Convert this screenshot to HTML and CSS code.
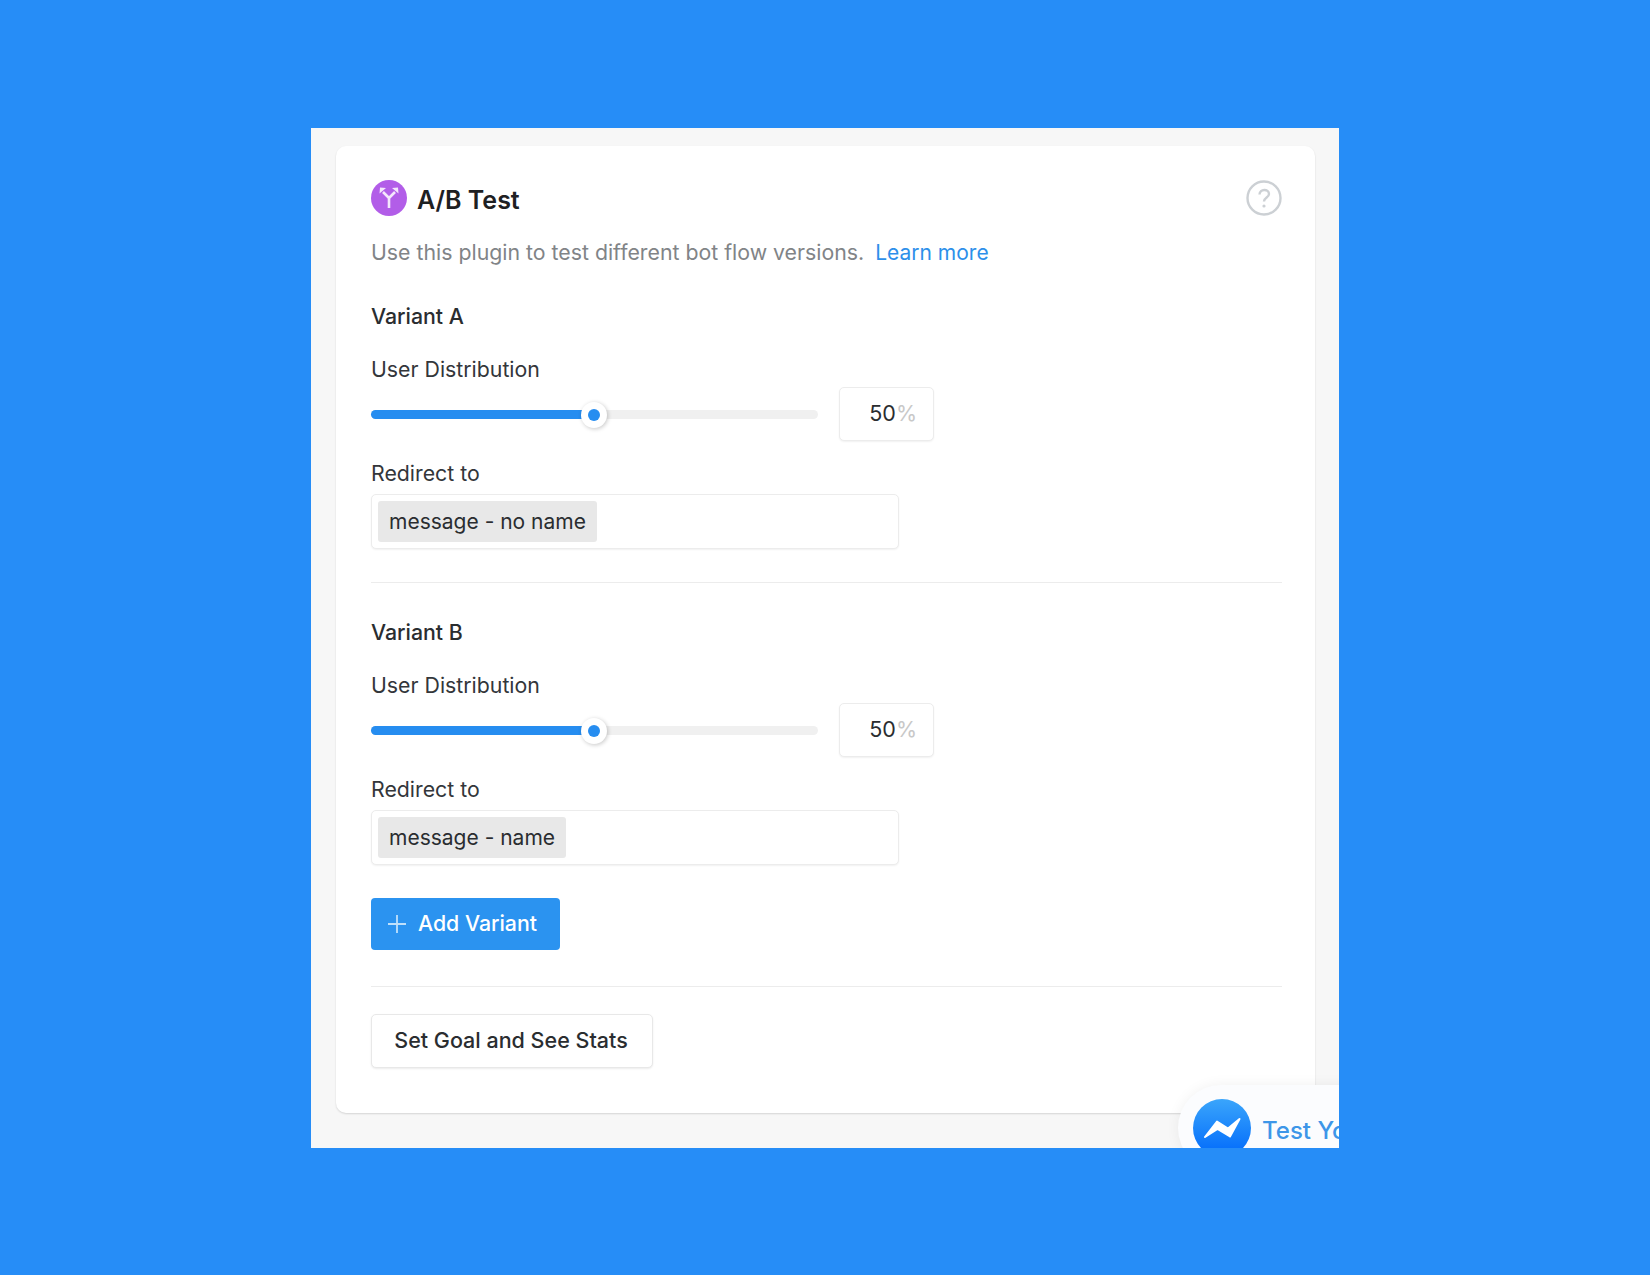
FILE: index.html
```html
<!DOCTYPE html>
<html lang="en">
<head>
  <meta charset="UTF-8">
  <title>A/B Test</title>
  <link rel="stylesheet" href="styles.css">
</head>
<body>
  <div class="panel">
    <div class="card">
      <!-- Header -->
      <div class="header">
        <div class="logo">
          <svg class="logo-icon" viewBox="0 0 36 36">
            <circle cx="18" cy="18" r="18" fill="#b25de8"/>
            <path d="M18 28v-10M18 18l-6-6M18 18l6-6" fill="none" stroke="#f4e6fc" stroke-width="2.600"/>
            <path d="M8.500 13.500l.5-6 6 .5zM27.500 13.500l-.5-6-6 .5z" fill="#f4e6fc"/>
          </svg>
          <h1 class="title">A/B Test</h1>
        </div>
        <svg class="help-icon" viewBox="0 0 36 36">
          <circle cx="18" cy="18" r="16.500" fill="none" stroke="#ccd0d4" stroke-width="2.400"/>
          <path d="M13.500 14.500c0-6 9.500-6 9.500-.500 0 3.500-5 3.500-5 7.500" fill="none" stroke="#ccd0d4" stroke-width="2.400"/>
          <circle cx="18" cy="26" r="1.600" fill="#ccd0d4"/>
        </svg>
      </div>
      <p class="description">Use this plugin to test different bot flow versions.<a class="learn-more" href="#">Learn more</a></p>

      <!-- Variant A -->
      <div class="variant">
        <div class="variant-name">Variant A</div>
        <div class="field-label">User Distribution</div>
        <div class="slider-row">
          <div class="slider">
            <div class="slider-fill"></div>
            <div class="slider-thumb"></div>
          </div>
          <div class="percent-box">50<span class="percent-sign">%</span></div>
        </div>
        <div class="field-label redirect-label">Redirect to</div>
        <div class="redirect-box"><span class="chip">message - no name</span></div>
      </div>

      <div class="divider"></div>

      <!-- Variant B -->
      <div class="variant">
        <div class="variant-name">Variant B</div>
        <div class="field-label">User Distribution</div>
        <div class="slider-row">
          <div class="slider">
            <div class="slider-fill"></div>
            <div class="slider-thumb"></div>
          </div>
          <div class="percent-box">50<span class="percent-sign">%</span></div>
        </div>
        <div class="field-label redirect-label">Redirect to</div>
        <div class="redirect-box"><span class="chip">message - name</span></div>
      </div>

      <button class="add-button">
        <svg class="plus-icon" viewBox="0 0 20 20"><path d="M10 1v18M1 10h18" stroke="#bfe0fb" stroke-width="1.800"/></svg>
        <span>Add Variant</span>
      </button>

      <div class="divider divider-bottom"></div>

      <button class="stats-button">Set Goal and See Stats</button>
    </div>

    <!-- Test button -->
    <div class="test-pill">
      <svg class="messenger-icon" viewBox="0 0 58 58">
        <defs>
          <linearGradient id="messengerBlue" x1="0" y1="0" x2="0" y2="1">
            <stop offset="0" stop-color="#3aa5fb"/>
            <stop offset="1" stop-color="#0069fb"/>
          </linearGradient>
        </defs>
        <circle cx="29" cy="29" r="29" fill="url(#messengerBlue)"/>
        <path d="M12 38L24 22.500 35 29.500 46.500 20 37 37.500 24.500 30z" fill="#fff" stroke="#fff" stroke-width="2" stroke-linejoin="round"/>
      </svg>
      <span class="test-text">Test Your Bot</span>
    </div>
  </div>
</body>
</html>
```

FILE: styles.css
```css
*,
*::before,
*::after {
  box-sizing: border-box;
}

html {
  height: 100%;
}

body {
  margin: 0;
  height: 100%;
  padding: 128px 0 0 311px;
  background: #268df7;
  font-family: Inter, "Liberation Sans", sans-serif;
  color: #2a2d30;
}

button {
  font-family: inherit;
  margin: 0;
  cursor: pointer;
}

.panel {
  position: relative;
  width: 1028px;
  height: 1020px;
  padding: 18px 24px 0 25px;
  background: #f7f7f7;
  overflow: hidden;
}

.card {
  height: 967px;
  padding: 34px 33px 0 35px;
  background: #fff;
  border-radius: 10px;
  box-shadow: 0 1px 2px rgba(0, 0, 0, 0.14);
}

.header {
  display: flex;
  align-items: center;
  justify-content: space-between;
  height: 36px;
}

.logo {
  display: flex;
  align-items: center;
  gap: 10px;
}

.logo-icon {
  width: 36px;
  height: 36px;
}

.title {
  margin: 3px 0 0;
  font-size: 25px;
  font-weight: 600;
  color: #1e2022;
}

.help-icon {
  width: 36px;
  height: 36px;
}

.description {
  height: 28px;
  margin: 23px 0 0;
  font-size: 21.300px;
  line-height: 26px;
  color: #818487;
}

.learn-more {
  margin-left: 11px;
  font-size: 21px;
  color: #2d8fea;
  text-decoration: none;
}

.variant {
  margin-top: 36px;
}

.variant-name {
  padding-bottom: 2px;
  font-size: 21.300px;
  line-height: 26px;
  font-weight: 500;
  color: #2a2d30;
}

.field-label {
  margin-top: 25px;
  padding-bottom: 2px;
  font-size: 21.300px;
  line-height: 26px;
  color: #33363a;
}

.redirect-label {
  margin-top: 19px;
}

.slider-row {
  display: flex;
  align-items: center;
  gap: 21px;
  margin-top: 3px;
}

.slider {
  position: relative;
  width: 447px;
  height: 9px;
  background: #f0f0f0;
  border-radius: 5px;
}

.slider-fill {
  width: 212px;
  height: 100%;
  background: #268df0;
  border-radius: 5px 0 0 5px;
}

.slider-thumb {
  position: absolute;
  left: 210px;
  top: -8px;
  width: 26px;
  height: 26px;
  background: #fff;
  border-radius: 50%;
  box-shadow: 1px 1px 4px rgba(0, 0, 0, 0.22);
}

.slider-thumb::after {
  content: '';
  position: absolute;
  left: 7px;
  top: 7px;
  width: 12px;
  height: 12px;
  background: #268df0;
  border-radius: 50%;
}

.percent-box {
  width: 95px;
  height: 54px;
  padding-right: 16px;
  text-align: right;
  font-size: 21.500px;
  line-height: 50px;
  color: #2a2d30;
  background: #fff;
  border: 1px solid #ececec;
  border-radius: 5px;
  box-shadow: 0 1px 2px rgba(0, 0, 0, 0.06);
}

.percent-sign {
  color: #c8c8c8;
}

.redirect-box {
  display: flex;
  align-items: center;
  width: 528px;
  height: 55px;
  margin-top: 6px;
  padding: 0 6px;
  background: #fff;
  border: 1px solid #ececec;
  border-radius: 5px;
  box-shadow: 0 1px 2px rgba(0, 0, 0, 0.06);
}

.chip {
  height: 41px;
  padding: 0 11px;
  font-size: 21px;
  line-height: 41px;
  color: #2a2d30;
  background: #e8e8e8;
  border-radius: 3px;
}

.divider {
  height: 1px;
  margin-top: 33px;
  background: #ececec;
}

.add-button {
  display: flex;
  align-items: center;
  gap: 11px;
  width: 189px;
  height: 52px;
  margin-top: 33px;
  padding: 0 0 2px 16px;
  font-size: 21.300px;
  font-weight: 500;
  color: #fff;
  background: #2b93f0;
  border: none;
  border-radius: 4px;
}

.plus-icon {
  width: 20px;
  height: 20px;
  margin-top: 2px;
}

.divider-bottom {
  margin-top: 36px;
}

.stats-button {
  display: block;
  width: 282px;
  height: 54px;
  margin-top: 27px;
  padding: 0 2px 2px 0;
  font-size: 21.500px;
  font-weight: 500;
  color: #2a2d30;
  background: #fff;
  border: 1px solid #e8e8e8;
  border-radius: 5px;
  box-shadow: 0 1px 2px rgba(0, 0, 0, 0.08);
}

.test-pill {
  position: absolute;
  left: 867px;
  top: 957px;
  display: flex;
  align-items: center;
  gap: 11px;
  width: 320px;
  height: 86px;
  padding-left: 15px;
  background: #fbfcfe;
  border-radius: 43px;
  box-shadow: 0 0 14px rgba(0, 0, 0, 0.06);
  white-space: nowrap;
}

.messenger-icon {
  flex: none;
  width: 58px;
  height: 58px;
}

.test-text {
  margin-top: 4px;
  font-size: 24px;
  font-weight: 500;
  color: #3d96e8;
}
```
